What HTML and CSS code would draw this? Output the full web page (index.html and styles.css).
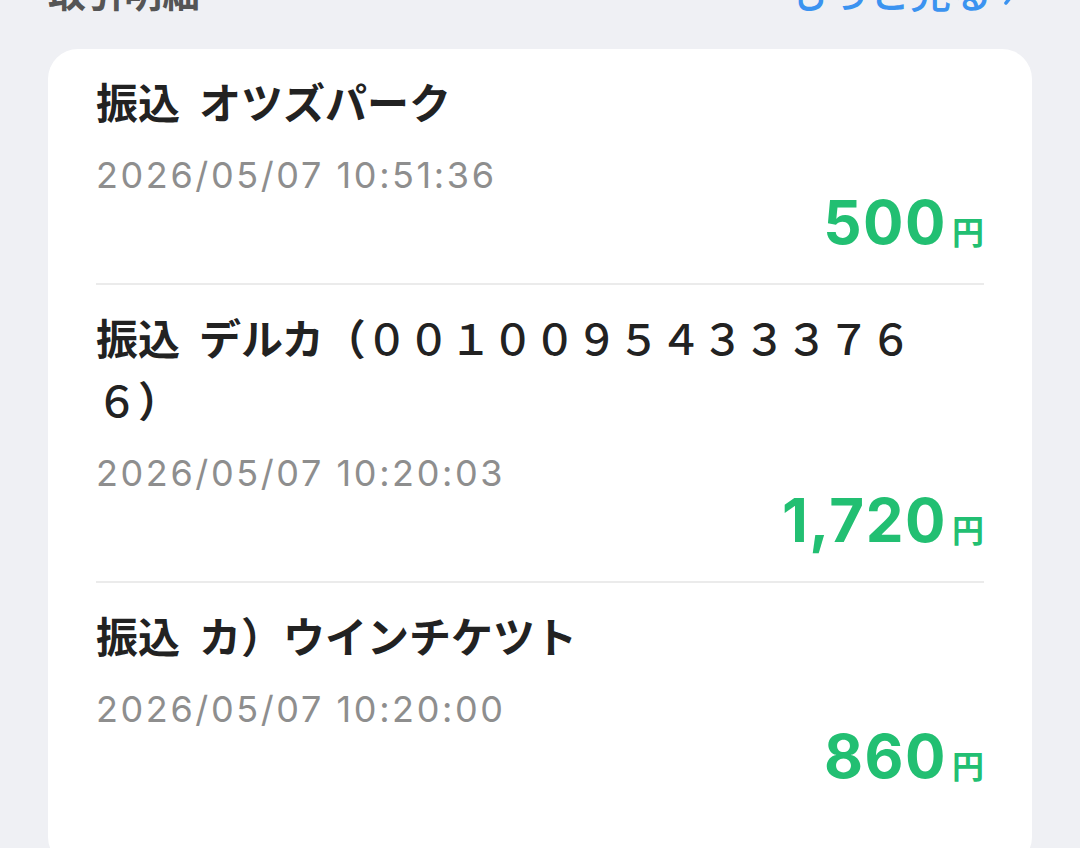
FILE: index.html
```html
<!DOCTYPE html>
<html lang="ja">
<head>
  <meta charset="UTF-8" />
  <title>取引明細</title>
  <meta name="viewport" content="width=device-width, initial-scale=1.0" />
  <link rel="stylesheet" href="styles.css">
</head>
<body>

  <!-- Section header -->
  <div class="section-head">
    <h2 class="section-title">取引明細</h2>
    <a class="more-link" href="#">もっと見る
      <svg class="chevron" width="18" height="34" viewBox="0 0 18 34">
        <path d="M4 4 L14 17 L4 30" fill="none" stroke="#3b93f0" stroke-width="3.6" stroke-linecap="round" stroke-linejoin="round" />
      </svg>
    </a>
  </div>

  <!-- Transactions -->
  <div class="card">
    <div class="tx">
      <div class="tx-title">振込&nbsp;&nbsp;オツズパーク</div>
      <div class="tx-date">2026/05/07 10:51:36</div>
      <div class="tx-amount"><span class="num">500</span><span class="yen">円</span></div>
    </div>

    <div class="tx">
      <div class="tx-title">振込&nbsp;&nbsp;デルカ（<span class="wide">００１００９５４３３３７６６</span>）</div>
      <div class="tx-date">2026/05/07 10:20:03</div>
      <div class="tx-amount"><span class="num">1,720</span><span class="yen">円</span></div>
    </div>

    <div class="tx">
      <div class="tx-title">振込&nbsp;&nbsp;カ）ウインチケツト</div>
      <div class="tx-date">2026/05/07 10:20:00</div>
      <div class="tx-amount"><span class="num">860</span><span class="yen">円</span></div>
    </div>
  </div>

</body>
</html>
```

FILE: styles.css
```css
body {
  margin: 0;
  padding: 0 48px;
  background-color: #eff0f4;
  font-family: "Noto Sans CJK JP", "Noto Sans", sans-serif;
  overflow: hidden;
}

/* Header */
.section-head {
  display: flex;
  justify-content: space-between;
  align-items: center;
  height: 56px;
  margin-top: -38px;
  margin-bottom: 31px;
}

.section-title {
  margin: 0;
  font-size: 38px;
  font-weight: bold;
  color: #555;
}

.more-link {
  display: flex;
  align-items: center;
  gap: 10px;
  color: #3b93f0;
  font-size: 41px;
  font-weight: 500;
  text-decoration: none;
  padding-right: 12px;
}

/* Card */
.card {
  background-color: #fff;
  border-radius: 30px;
  padding: 0 48px;
  height: 818px;
}

.tx {
  padding: 21px 0 35px;
  border-bottom: 2px solid #ebebeb;
}

.tx:last-child {
  border-bottom: none;
}

.tx-title {
  font-size: 42px;
  line-height: 62px;
  font-weight: bold;
  color: #222;
}

.tx-title .wide {
  font-weight: 500;
}

.tx-date {
  margin-top: 21px;
  font-family: Inter, "Noto Sans", sans-serif;
  font-size: 36px;
  line-height: 44px;
  letter-spacing: 2.6px;
  color: #8e8e8e;
}

.tx-amount {
  display: flex;
  justify-content: flex-end;
  align-items: baseline;
  height: 52px;
  margin-top: -1px;
  color: #22bf72;
  font-weight: bold;
}

.tx-amount .num {
  font-family: Inter, "Noto Sans", sans-serif;
  font-size: 60px;
  line-height: 52px;
  letter-spacing: 1.5px;
}

.tx-amount .yen {
  font-size: 32px;
  line-height: 52px;
  margin-left: 5px;
}
```
